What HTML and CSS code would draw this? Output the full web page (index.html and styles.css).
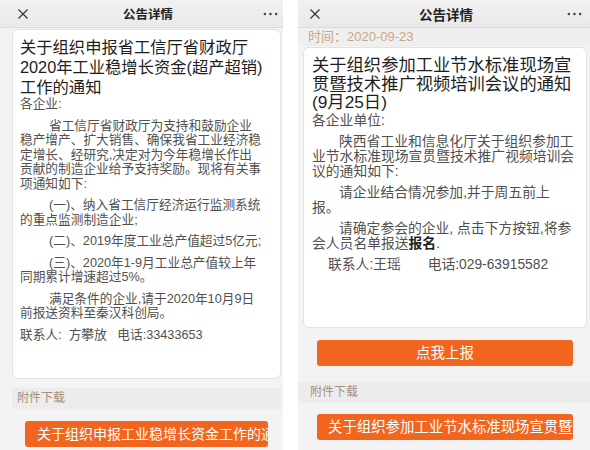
FILE: index.html
```html
<!DOCTYPE html>
<html lang="zh">
<head>
  <meta charset="UTF-8" />
  <title>公告详情</title>
  <link rel="stylesheet" href="styles.css">
</head>
<body>
  <div class="screens">
    <!-- 左边：稳增长资金 -->
    <section class="phone phone-left">
      <header class="topbar">
        <svg class="close" viewBox="0 0 10 10"><path d="M0.5 0.5 L9.5 9.5 M9.5 0.5 L0.5 9.5" /></svg>
        <span class="bar-title">公告详情</span>
        <svg class="more" viewBox="0 0 16 4"><circle cx="2" cy="2" r="1.3"/><circle cx="8" cy="2" r="1.3"/><circle cx="14" cy="2" r="1.3"/></svg>
      </header>
      <div class="page">
        <article class="card">
          <h1>关于组织申报省工信厅省财政厅<br>2020年工业稳增长资金(超产超销)<br>工作的通知</h1>
          <p>各企业:</p>
          <p class="indent">省工信厅省财政厅为支持和鼓励企业<br>稳产增产、扩大销售、确保我省工业经济稳<br>定增长、经研究,决定对为今年稳增长作出<br>贡献的制造企业给予支持奖励。现将有关事<br>项通知如下:</p>
          <p class="indent">(一)、纳入省工信厅经济运行监测系统<br>的重点监测制造企业;</p>
          <p class="indent">(二)、2019年度工业总产值超过5亿元;</p>
          <p class="indent">(三)、2020年1-9月工业总产值较上年<br>同期累计增速超过5%。</p>
          <p class="indent">满足条件的企业,请于2020年10月9日<br>前报送资料至秦汉科创局。</p>
          <p>联系人:&nbsp;&nbsp;方攀放&nbsp;&nbsp;&nbsp;电话:33433653</p>
        </article>
        <div class="attach">附件下载</div>
        <div class="file-btn">关于组织申报工业稳增长资金工作的通知</div>
      </div>
    </section>

    <!-- 右边：节水标准培训 -->
    <section class="phone phone-right">
      <header class="topbar">
        <svg class="close" viewBox="0 0 10 10"><path d="M0.5 0.5 L9.5 9.5 M9.5 0.5 L0.5 9.5" /></svg>
        <span class="bar-title">公告详情</span>
        <svg class="more" viewBox="0 0 16 4"><circle cx="2" cy="2" r="1.3"/><circle cx="8" cy="2" r="1.3"/><circle cx="14" cy="2" r="1.3"/></svg>
      </header>
      <div class="page">
        <div class="time">时间：2020-09-23</div>
        <article class="card">
          <h1>关于组织参加工业节水标准现场宣<br>贯暨技术推广视频培训会议的通知<br>(9月25日)</h1>
          <p>各企业单位:</p>
          <p class="indent">陕西省工业和信息化厅关于组织参加工<br>业节水标准现场宣贯暨技术推广视频培训会<br>议的通知如下:</p>
          <p class="indent">请企业结合情况参加,并于周五前上<br>报。</p>
          <p class="indent">请确定参会的企业, 点击下方按钮,将参<br>会人员名单报送<b>报名</b>.</p>
          <p class="contact">联系人:王瑶&nbsp;&nbsp;&nbsp;&nbsp;&nbsp;&nbsp;&nbsp;电话:029-63915582</p>
        </article>
        <div class="report-btn">点我上报</div>
        <div class="attach">附件下载</div>
        <div class="file-btn">关于组织参加工业节水标准现场宣贯暨技术推广视频培训会议的通知</div>
      </div>
    </section>
  </div>
</body>
</html>
```

FILE: styles.css
```css
* {
  box-sizing: border-box;
}

body {
  margin: 0;
  background: #fff;
  font-family: "Liberation Sans", "Noto Sans CJK SC", sans-serif;
  width: 590px;
  height: 450px;
  overflow: hidden;
}

.screens {
  display: flex;
  gap: 15px;
  height: 450px;
}

.phone {
  background: #f3f3f3;
  height: 450px;
  overflow: hidden;
}

.phone-left {
  width: 283px;
}

.phone-right {
  width: 292px;
}

/* 顶部导航 */
.topbar {
  height: 28px;
  display: grid;
  grid-template-columns: 1fr auto 1fr;
  align-items: center;
  background: linear-gradient(#f1f1f1, #e9e9e9);
  border-bottom: 1px solid #dcdcdc;
  color: #222;
}

.phone-left .topbar {
  padding: 0 5px 0 18px;
}

.phone-right .topbar {
  padding: 0 8px 0 12px;
}

.close {
  width: 10px;
  height: 10px;
  stroke: #333;
  stroke-width: 1.2;
  fill: none;
}

.bar-title {
  font-size: 12.5px;
  font-weight: bold;
  font-family: "Noto Sans CJK SC", sans-serif;
}

.phone-right .bar-title {
  font-size: 13.5px;
}

.more {
  justify-self: end;
  width: 15px;
  height: 4px;
  fill: #444;
}

/* 内容 */
.page {
  padding-top: 1px;
}

.phone-left .page {
  padding-left: 12px;
  padding-right: 2px;
}

.phone-right .page {
  padding-left: 5px;
  padding-right: 3px;
}

.card {
  background: #fff;
  border: 1px solid #e2e2e2;
  border-radius: 6px;
  color: #505050;
}

.card h1 {
  margin: 0;
  font-weight: normal;
  color: #1e1e1e;
}

.card p {
  margin: 7px 0 0;
}

.card p.indent {
  text-indent: 29px;
}

.phone-left .card {
  padding: 7px 4px 36px 7px;
  font-size: 12.7px;
  line-height: 14.5px;
}

.phone-left .card h1 {
  font-size: 16.3px;
  line-height: 20px;
}

.phone-left .card h1 + p {
  margin-top: 0;
}

.time {
  height: 18px;
  line-height: 18px;
  margin: -1px -3px 0 -5px;
  padding-left: 10px;
  background: #efefef;
  color: #caa783;
  font-size: 13px;
}

.phone-right .card {
  margin-top: 1px;
  padding: 8px 4px 55px 8px;
  font-size: 13.8px;
  line-height: 15px;
}

.phone-right .card h1 {
  font-size: 17.3px;
  line-height: 18.5px;
}

.phone-right .card h1 + p {
  margin-top: 1px;
}

.phone-right .card p {
  margin-top: 6px;
}

.phone-right .card p.indent {
  text-indent: 27px;
}

.card b {
  color: #222;
}

.card p.contact {
  padding-left: 16px;
}

/* 附件 */
.attach {
  height: 21px;
  line-height: 21px;
  background: #ececec;
  color: #a58f80;
  font-size: 12px;
}

.phone-left .attach {
  margin: 9px 0 0;
  padding-left: 5px;
}

.phone-right .attach {
  margin: 16px -3px 0 -5px;
  padding-left: 12px;
}

.file-btn,
.report-btn {
  height: 26px;
  line-height: 26px;
  background: #f1651e;
  color: #fff;
  border-radius: 3px;
  white-space: nowrap;
  overflow: hidden;
  font-size: 14px;
}

.phone-left .file-btn {
  margin: 12px 13px 0 13px;
  padding-left: 12px;
}

.phone-right .file-btn {
  margin: 11px 14px 0 14px;
  padding-left: 11px;
  font-size: 14.4px;
}

.report-btn {
  margin: 12px 14px 0 14px;
  text-align: center;
  font-size: 14.5px;
}
```
